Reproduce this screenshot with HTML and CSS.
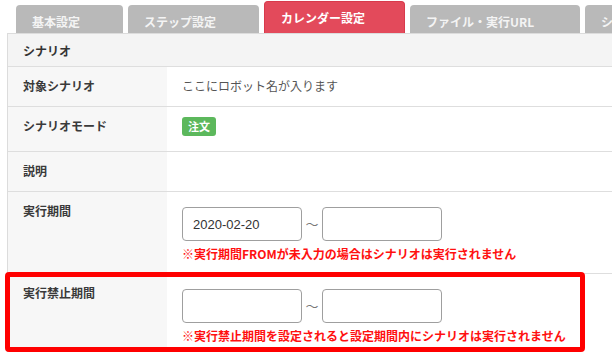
FILE: index.html
```html
<!DOCTYPE html>
<html lang="ja">
<head>
    <meta charset="UTF-8">
    <meta name="viewport" content="width=device-width, initial-scale=1.0">
    <title>カレンダー設定</title>
    <link rel="stylesheet" href="styles.css">
</head>
<body>

    <div class="page">
        <ul class="tabs">
            <li>基本設定</li>
            <li>ステップ設定</li>
            <li class="active">カレンダー設定</li>
            <li>ファイル・実行URL</li>
            <li>シナリオ実行</li>
        </ul>

        <div class="panel">
            <div class="panel-head">シナリオ</div>

            <div class="row">
                <div class="label">対象シナリオ</div>
                <div class="value">ここにロボット名が入ります</div>
            </div>
            <div class="row">
                <div class="label">シナリオモード</div>
                <div class="value value-badge"><span class="badge">注文</span></div>
            </div>
            <div class="row">
                <div class="label">説明</div>
                <div class="value"></div>
            </div>
            <div class="row">
                <div class="label">実行期間</div>
                <div class="value value-form">
                    <div class="range">
                        <input type="text" value="2020-02-20">
                        <span class="tilde">〜</span>
                        <input type="text">
                    </div>
                    <p class="note">※実行期間FROMが未入力の場合はシナリオは実行されません</p>
                </div>
            </div>
            <div class="row row-marked">
                <div class="label">実行禁止期間</div>
                <div class="value value-form">
                    <div class="range">
                        <input type="text">
                        <span class="tilde">〜</span>
                        <input type="text">
                    </div>
                    <p class="note">※実行禁止期間を設定されると設定期間内にシナリオは実行されません</p>
                </div>
                <!-- highlight frame -->
                <div class="marker"></div>
            </div>
        </div>
    </div>

</body>
</html>
```

FILE: styles.css
```css
/* Base */
body {
    margin: 0;
    overflow: hidden;
    background: #fff;
    font-family: "Noto Sans CJK JP", "Noto Sans", sans-serif;
    font-size: 12px;
    color: #333;
}

.page {
    padding: 1px 0 0 7px;
    width: 660px;
}

/* Tabs */
.tabs {
    display: flex;
    align-items: flex-end;
    gap: 5px;
    margin: 0 0 0 9px;
    padding: 0;
    list-style: none;
    overflow: hidden;
}

.tabs li {
    flex-shrink: 0;
    box-sizing: border-box;
    height: 28px;
    padding: 6px 0 0 16px;
    line-height: 22px;
    background-color: #b9b9b9;
    color: #f4f4f4;
    font-weight: 600;
    border-radius: 4px 4px 0 0;
    white-space: nowrap;
}

.tabs li:nth-child(1) { width: 107px; }
.tabs li:nth-child(2) { width: 131px; }
.tabs li:nth-child(3) { width: 141px; }
.tabs li:nth-child(4) { width: 170px; }
.tabs li:nth-child(5) { width: 90px; }

.tabs li.active {
    height: 32px;
    padding-top: 0;
    line-height: 31px;
    background-color: #e34a5b;
    color: #fff;
    border: 1px solid #d83a4c;
    border-bottom: none;
    padding-left: 16px;
}

/* Panel */
.panel {
    border-top: 1px solid #dcdcdc;
    border-left: 1px solid #dcdcdc;
}

.panel-head {
    padding: 10px 15px 8px;
    line-height: 14px;
    background-color: #f4f4f4;
    font-weight: 700;
    color: #333;
}

.row {
    position: relative;
    display: grid;
    grid-template-columns: 159px 1fr;
    border-top: 1px solid #dedede;
}

.label {
    padding: 12px 15px 13px;
    line-height: 14px;
    background-color: #f7f7f7;
    font-weight: 700;
    color: #3a3a3a;
}

.value {
    padding: 12px 15px 13px;
    line-height: 14px;
    color: #555;
}

.value-badge {
    padding: 10px 15px 15px;
}

.badge {
    display: inline-block;
    padding: 0 6px;
    line-height: 19px;
    background-color: #5cb85c;
    color: #fff;
    font-size: 11px;
    font-weight: 700;
    border-radius: 3px;
}

/* Date range */
.value-form {
    padding: 15px 15px 12px;
}

.range {
    display: flex;
    align-items: center;
}

.range input {
    box-sizing: border-box;
    width: 120px;
    height: 34px;
    margin: 0;
    padding: 0 10px;
    border: 1px solid #9f9f9f;
    border-radius: 4px;
    font-family: "Liberation Sans", Arial, sans-serif;
    font-size: 13px;
    color: #333;
    background: #fff;
}

.tilde {
    width: 20px;
    text-align: center;
    font-size: 13px;
    color: #777;
}

.note {
    margin: 6px 0 0;
    line-height: 14px;
    color: #ff1010;
    font-weight: 700;
}

/* Highlight frame */
.marker {
    position: absolute;
    top: -2px;
    left: -3px;
    box-sizing: border-box;
    width: 580px;
    height: 80px;
    border: 5px solid #ff0000;
    border-radius: 4px;
    pointer-events: none;
}
```
